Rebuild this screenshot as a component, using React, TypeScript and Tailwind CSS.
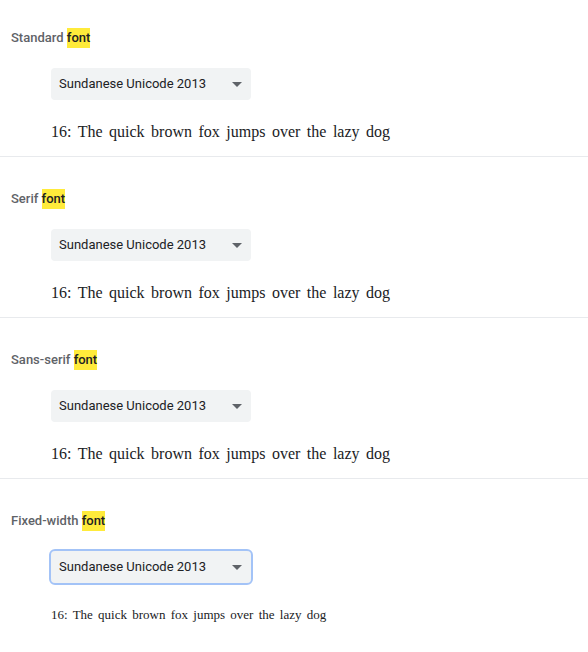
import React from "react";

interface FontSectionProps {
  label: string;
  first?: boolean;
  focused?: boolean;
  small?: boolean;
  last?: boolean;
}

const FontSection = ({ label, first, focused, small, last }: FontSectionProps) => {
  return (
    <div
      className={`flex flex-col ${first ? "pt-[28px]" : "pt-[32px]"} ${
        last ? "" : "border-b border-[#e8eaed]"
      } pb-[13px]`}
    >
      {/* Label */}
      <div className="pl-[11px] h-5 flex items-center whitespace-pre text-[13px] font-medium text-[#5f6368]">
        <span>{label} </span>
        <span className="bg-[#ffeb3b] text-[#202124]">font</span>
      </div>

      {/* Select */}
      <div className="pl-[51px] mt-[20px]">
        <div
          className={`relative w-[200px] h-8 rounded bg-[#f1f3f4] flex items-center pl-2 text-[13px] text-[#202124] ${
            focused ? "outline-2 outline-[#a3c3f7]" : ""
          }`}
        >
          Sundanese Unicode 2013
          <svg
            className="absolute right-[9px] top-[14px]"
            width="10"
            height="5"
            viewBox="0 0 10 5"
          >
            <path d="M0 0h10L5 5z" fill="#5f6368" />
          </svg>
        </div>
      </div>

      {/* Sample */}
      <div
        className={`pl-[51px] mt-[20px] mb-[-1px] h-6 flex items-center text-[#202124] font-['Liberation_Serif',serif] ${
          small ? "text-[13px] [word-spacing:2px]" : "text-[16px] [word-spacing:2.5px]"
        }`}
      >
        16: The quick brown fox jumps over the lazy dog
      </div>
    </div>
  );
};

export default function App() {
  return (
    <div className="w-[588px] h-[652px] bg-white font-['Roboto',sans-serif]">
      <FontSection label="Standard" first />
      <FontSection label="Serif" />
      <FontSection label="Sans-serif" />
      <FontSection label="Fixed-width" focused small last />
    </div>
  );
}
